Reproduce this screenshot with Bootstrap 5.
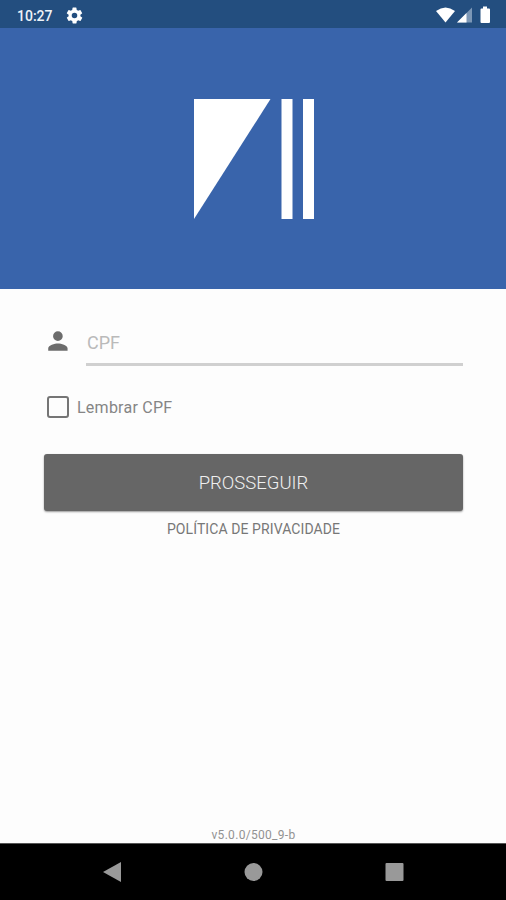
<!DOCTYPE html>
<html lang="pt-BR">
<head>
<meta charset="utf-8">
<meta name="viewport" content="width=device-width, initial-scale=1">
<title>Login</title>
<link href="https://cdn.jsdelivr.net/npm/bootstrap@5.3.0/dist/css/bootstrap.min.css" rel="stylesheet">
<style>
body{font-family:Roboto,sans-serif;background:#fdfdfd;height:900px;overflow:hidden;color:#777}
svg{display:block;flex:none}
.status-bar{height:28px;background:#234e7f;color:#fff;padding:0 15px 0 17px}
.clock{font-size:14px;line-height:28px;font-weight:500;width:48px;padding-top:3px;color:#eef3f8}
.gear{margin-top:2px}
.hero{height:261px;background:#3964ab;padding:71px 0 0 2px}
.login-form{padding:37px 43px 0 44px}
.cpf-line{margin-left:13px;height:40px;border-bottom:3px solid #d0d0d0}
.cpf-line .form-control{font-size:18px;line-height:24px;height:24px;margin:5px 0 0 1px;color:#777}
.cpf-line .form-control::placeholder{color:#bababa;opacity:1}
.remember{margin-top:29px;padding-left:3px;height:24px}
.remember .form-check-input{width:22px;height:22px;border:2px solid #757575;border-radius:3px;background:#fdfdfd}
.remember label{font-size:16px;line-height:24px;margin-left:8px;padding-top:2px;color:#858585;letter-spacing:.25px}
.btn-go{height:57px;margin-top:35px;background:#666;color:#f0f0f0;font-size:18.500px;font-weight:300;border:0;border-radius:3px;box-shadow:0 1px 2px rgba(0,0,0,.4)}
.btn-go span{display:block;padding-top:2px}
.privacy{font-size:14px;line-height:18px;margin-top:9px;color:#777;letter-spacing:.09px}
.version{font-size:12px;line-height:16px;color:#929292;letter-spacing:.3px}
.nav-keys{height:57px;background:#000;border-top:1px solid #555}
</style>
</head>
<body class="d-flex flex-column">
<header class="status-bar d-flex align-items-center flex-shrink-0">
  <span class="clock">10:27</span>
  <svg width="19" height="19" viewBox="0 0 24 24" fill="#fff" class="gear"><path d="M19.4 13a7.800 7.800 0 0 0 0-2l2.100-1.650c.2-.15.250-.42.120-.64l-2-3.460a.5.5 0 0 0-.6-.22l-2.500 1a7.300 7.300 0 0 0-1.700-.98l-.38-2.650A.5.500 0 0 0 14 2h-4a.5.500 0 0 0-.5.420l-.38 2.650a7.700 7.700 0 0 0-1.700.98l-2.500-1a.5.5 0 0 0-.6.220l-2 3.460a.5.5 0 0 0 .12.640L4.600 11a7.900 7.900 0 0 0 0 2l-2.100 1.650a.5.5 0 0 0-.12.640l2 3.460c.12.220.39.300.6.220l2.500-1c.52.400 1.080.73 1.700.98l.38 2.650c.03.240.24.400.5.400h4c.25 0 .46-.16.500-.4l.38-2.650a7.300 7.300 0 0 0 1.700-.98l2.500 1c.22.080.48 0 .6-.22l2-3.460a.5.5 0 0 0-.12-.64zM12 15.500a3.500 3.500 0 1 1 0-7 3.500 3.500 0 0 1 0 7z"/></svg>
  <svg class="ms-auto" width="55" height="28" viewBox="436 0 55 28"><path d="M436 11Q445.500 4 455 11L445.500 22.500z" fill="#fff"/><path d="M472 7.500V22.500H457z" fill="#7c97b6"/><path d="M466.500 13V22.500H457z" fill="#fff"/><path d="M483 6.500h4v2h2q1 0 1 1v12.500q0 1-1 1h-7.500q-1 0-1-1V9.500q0-1 1-1H483z" fill="#fff"/></svg>
</header>
<section class="hero d-flex justify-content-center align-items-start flex-shrink-0">
  <svg width="120" height="120" viewBox="0 0 120 120" fill="#fff" aria-label="Logo"><path d="M0 0H76.500L0 120z"/><path d="M87.500 0h11v120h-11zM109 0h11v120H109z"/></svg>
</section>
<main class="login-form flex-grow-1 d-flex flex-column">
  <div class="d-flex">
    <svg width="29" height="30" viewBox="0.500 0 24 24" fill="#6c6c6c"><path d="M12 12a4 4 0 1 0 0-8 4 4 0 0 0 0 8zm0 2c-2.670 0-8 1.340-8 4v2h16v-2c0-2.660-5.330-4-8-4z"/></svg>
    <div class="cpf-line flex-grow-1"><input class="form-control border-0 rounded-0 bg-transparent p-0 shadow-none" type="text" placeholder="CPF" aria-label="CPF"></div>
  </div>
  <div class="remember d-flex align-items-center">
    <input class="form-check-input m-0 shadow-none" type="checkbox" id="remember"><label for="remember">Lembrar CPF</label>
  </div>
  <button class="btn btn-go w-100 p-0" type="button"><span>PROSSEGUIR</span></button>
  <a href="#" class="privacy text-center text-decoration-none">POLÍTICA DE PRIVACIDADE</a>
  <div class="version text-center mt-auto">v5.0.0/500_9-b</div>
</main>
<nav class="nav-keys d-flex flex-shrink-0" aria-label="Sistema">
  <svg width="506" height="56" viewBox="0 844 506 56" fill="#999"><path d="M103 872L121 862V882z"/><circle cx="253.500" cy="872" r="9"/><rect x="385.500" y="863" width="18" height="18" rx="1"/></svg>
</nav>
<script src="https://cdn.jsdelivr.net/npm/bootstrap@5.3.0/dist/js/bootstrap.bundle.min.js"></script>
</body>
</html>
